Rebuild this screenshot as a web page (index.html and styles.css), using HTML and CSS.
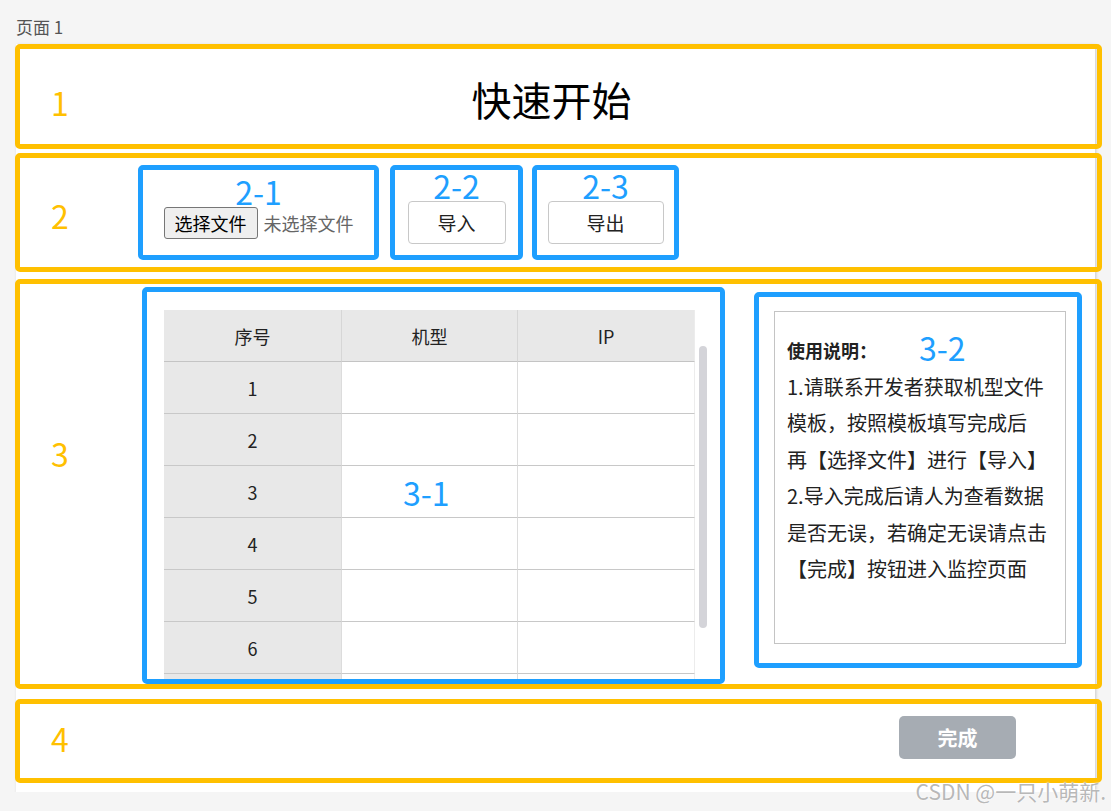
FILE: index.html
```html
<!DOCTYPE html>
<html lang="zh-CN">
<head>
    <meta charset="UTF-8">
    <meta name="viewport" content="width=device-width, initial-scale=1.0">
    <title>快速开始</title>
    <link rel="stylesheet" href="styles.css">
</head>
<body>
    <div class="page-label">页面 1</div>
    <div class="page">
        <section class="zone zone-title">
            <div class="zone-no">1</div>
            <h1 class="title">快速开始</h1>
        </section>

        <section class="zone zone-tools">
            <div class="zone-no">2</div>
            <div class="mark mark-file">
                <div class="mark-no">2-1</div>
                <div class="file-picker">
                    <span class="file-btn">选择文件</span>
                    <span class="file-name">未选择文件</span>
                </div>
            </div>
            <div class="mark mark-import">
                <div class="mark-no">2-2</div>
                <button type="button" class="btn btn-import">导入</button>
            </div>
            <div class="mark mark-export">
                <div class="mark-no">2-3</div>
                <button type="button" class="btn btn-export">导出</button>
            </div>
        </section>

        <section class="zone zone-table">
            <div class="zone-no">3</div>
            <div class="mark mark-table">
                <div class="grid-box">
                    <div class="grid-wrap">
                        <table class="grid">
                            <colgroup>
                                <col class="col-no">
                                <col class="col-model">
                                <col class="col-ip">
                            </colgroup>
                            <thead>
                                <tr><th>序号</th><th>机型</th><th>IP</th></tr>
                            </thead>
                            <tbody>
                                <tr><td class="no">1</td><td></td><td></td></tr>
                                <tr><td class="no">2</td><td></td><td></td></tr>
                                <tr><td class="no">3</td><td></td><td></td></tr>
                                <tr><td class="no">4</td><td></td><td></td></tr>
                                <tr><td class="no">5</td><td></td><td></td></tr>
                                <tr><td class="no">6</td><td></td><td></td></tr>
                                <tr><td class="no"></td><td></td><td></td></tr>
                            </tbody>
                        </table>
                    </div>
                    <div class="scroll"><div class="scroll-thumb"></div></div>
                </div>
                <div class="mark-float float-table">3-1</div>
            </div>
            <div class="mark mark-notice">
                <div class="notice">
                    <div class="notice-title">使用说明：</div>
                    1.请联系开发者获取机型文件<br>
                    模板，按照模板填写完成后<br>
                    再【选择文件】进行【导入】<br>
                    2.导入完成后请人为查看数据<br>
                    是否无误，若确定无误请点击<br>
                    【完成】按钮进入监控页面
                </div>
                <div class="mark-float float-notice">3-2</div>
            </div>
        </section>

        <section class="zone zone-foot">
            <div class="zone-no">4</div>
            <button type="button" class="btn-done">完成</button>
        </section>
    </div>
    <div class="watermark">CSDN @一只小萌新.</div>
</body>
</html>
```

FILE: styles.css
```css
body {
    margin: 0;
    background-color: #f5f5f5;
    font-family: "Noto Sans CJK SC", sans-serif;
    color: #222;
}
.page-label {
    padding: 17px 0 7px 16px;
    font-size: 17px;
    line-height: 20px;
    color: #555;
}
.page {
    margin-left: 16px;
    width: 1079px;
    padding-bottom: 9px;
    background-color: #fff;
    box-shadow: 1px 1px 3px rgba(0, 0, 0, 0.18);
}
.zone {
    box-sizing: border-box;
    width: 1087px;
    margin-left: -1px;
    border: 5px solid #ffc000;
    border-radius: 5px;
    display: flex;
    align-items: flex-start;
}
.zone-no {
    flex: none;
    width: 80px;
    text-align: center;
    font-size: 32px;
    line-height: 32px;
    color: #ffc000;
}
.zone-title {
    height: 105px;
}
.zone-title .zone-no {
    margin-top: 37px;
}
.title {
    flex: 1;
    margin: 30px 94px 0 0;
    text-align: center;
    font-size: 40px;
    line-height: 40px;
    font-weight: normal;
    color: #000;
}
.zone-tools {
    height: 119px;
    margin-top: 4px;
    padding-top: 7px;
}
.zone-tools .zone-no {
    margin-top: 34px;
}
.mark {
    box-sizing: border-box;
    border: 5px solid #1e9fff;
    border-radius: 5px;
    display: flex;
    flex-direction: column;
    align-items: center;
}
.mark-no {
    font-size: 32px;
    line-height: 30px;
    color: #1e9fff;
}
.mark-file {
    width: 241px;
    height: 95px;
    margin-left: 38px;
    padding-top: 5px;
}
.mark-file .mark-no {
    line-height: 32px;
}
.mark-import {
    width: 133px;
    height: 95px;
    margin-left: 11px;
}
.mark-export {
    width: 147px;
    height: 95px;
    margin-left: 9px;
}
.file-picker {
    display: flex;
    align-items: center;
    gap: 6px;
}
.file-btn {
    box-sizing: border-box;
    height: 32px;
    padding: 0 10px;
    border: 1px solid #767676;
    border-radius: 3px;
    background-color: #efefef;
    font-size: 18px;
    line-height: 30px;
    color: #000;
}
.file-name {
    font-size: 18px;
    color: #666;
}
.btn {
    box-sizing: border-box;
    height: 43px;
    margin-top: 1px;
    border: 1px solid #c8c8c8;
    border-radius: 4px;
    background-color: #fff;
    font-family: "Noto Sans CJK SC", sans-serif;
    font-size: 19px;
    color: #222;
}
.btn-import {
    width: 98px;
}
.btn-export {
    width: 116px;
}
.zone-table {
    height: 410px;
    margin-top: 7px;
}
.zone-table .zone-no {
    margin-top: 153px;
}
.mark-table {
    display: block;
    position: relative;
    width: 583px;
    height: 397px;
    margin: 3px 0 0 42px;
    padding: 18px 0 0 17px;
}
.grid-box {
    display: flex;
}
.grid-wrap {
    width: 531px;
    height: 369px;
    overflow: hidden;
}
.grid {
    width: 531px;
    table-layout: fixed;
    border-collapse: separate;
    border-spacing: 0;
    font-size: 18px;
}
.col-no {
    width: 178px;
}
.col-model {
    width: 176px;
}
.col-ip {
    width: 177px;
}
.grid th, .grid td {
    height: 51px;
    padding: 0;
    text-align: center;
    font-weight: normal;
    color: #222;
    border-bottom: 1px solid #c8c8c8;
    border-right: 1px solid #dcdcdc;
}
.grid th {
    background-color: #e8e8e8;
    border-right-color: #d6d6d6;
    border-bottom-color: #c4c4c4;
}
.grid td.no {
    background-color: #e8e8e8;
}
.grid th:last-child, .grid td:last-child {
    border-right-color: #ececec;
}
.scroll {
    width: 8px;
    margin-left: 4px;
}
.scroll-thumb {
    height: 282px;
    margin-top: 36px;
    border-radius: 4px;
    background-color: #d4d4d9;
}
.mark-float {
    position: absolute;
    font-size: 32px;
    line-height: 32px;
    color: #1e9fff;
}
.float-table {
    left: 256px;
    top: 184px;
}
.mark-notice {
    display: block;
    position: relative;
    width: 328px;
    height: 376px;
    margin: 8px 0 0 29px;
    padding: 14px 11px 19px 15px;
}
.notice {
    box-sizing: border-box;
    height: 100%;
    padding: 20px 12px 0;
    border: 1px solid #c4c4c4;
    font-size: 20px;
    line-height: 36.5px;
    color: #222;
}
.notice-title {
    font-size: 18px;
    font-weight: bold;
}
.float-notice {
    left: 160px;
    top: 34px;
}
.zone-foot {
    height: 84px;
    margin-top: 10px;
}
.zone-foot .zone-no {
    margin-top: 18px;
}
.btn-done {
    width: 117px;
    height: 43px;
    margin: 12px 81px 0 auto;
    border: none;
    border-radius: 5px;
    background-color: #a6acb3;
    font-family: "Noto Sans CJK SC", sans-serif;
    font-size: 20px;
    font-weight: bold;
    color: #fff;
}
.watermark {
    position: absolute;
    top: 777px;
    right: 5px;
    font-size: 21px;
    line-height: 28px;
    color: rgba(165, 165, 165, 0.8);
    text-shadow: 0 0 1px #fff, 0 0 2px #fff;
}
```
